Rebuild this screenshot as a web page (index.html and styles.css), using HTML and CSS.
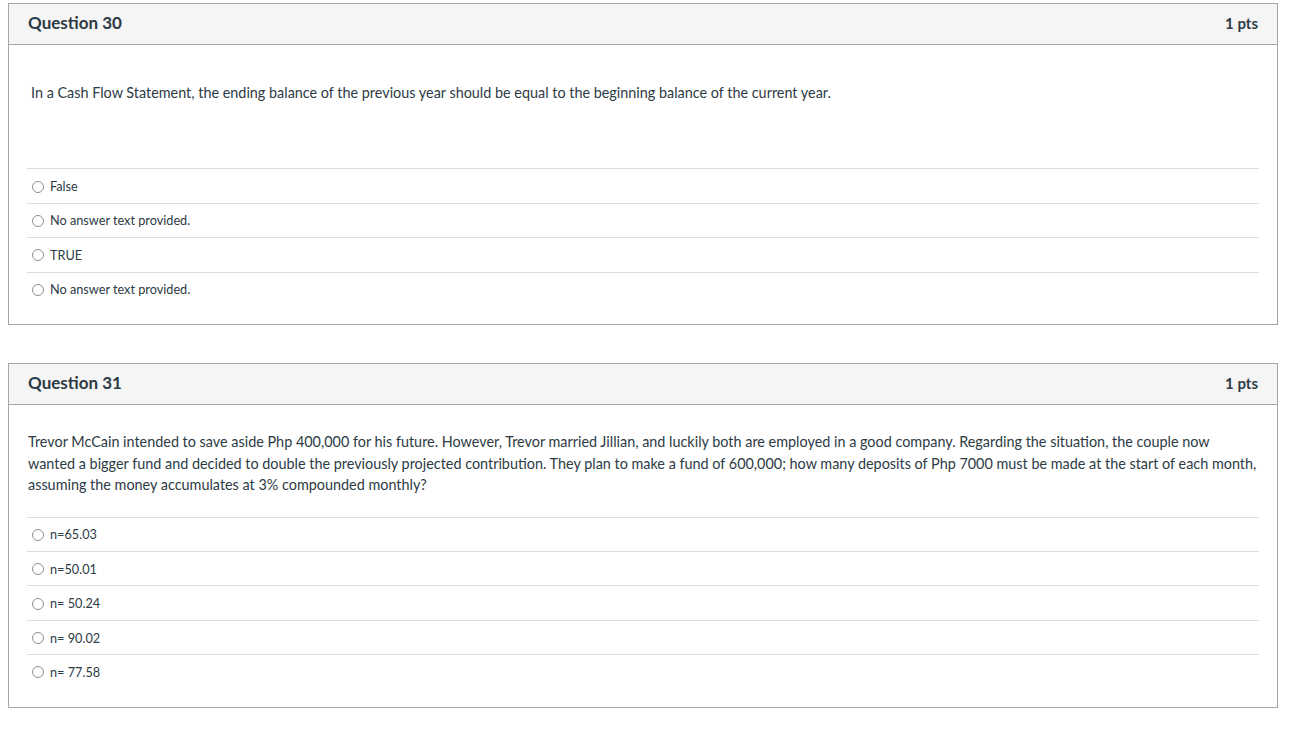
FILE: index.html
```html
<!DOCTYPE html>
<html lang="en">
<head>
    <meta charset="UTF-8">
    <meta name="viewport" content="width=device-width, initial-scale=1.0">
    <title>Quiz</title>
    <link rel="stylesheet" href="styles.css">
</head>
<body>
    <div class="question">
        <div class="header">
            <span class="name">Question 30</span>
            <span class="pts">1 pts</span>
        </div>
        <div class="text text-first">
            In a Cash Flow Statement, the ending balance of the previous year should be equal to the beginning balance of the current year.
        </div>
        <div class="answers">
            <div class="answer"><span class="radio"></span>False</div>
            <div class="answer"><span class="radio"></span>No answer text provided.</div>
            <div class="answer"><span class="radio"></span>TRUE</div>
            <div class="answer"><span class="radio"></span>No answer text provided.</div>
        </div>
    </div>

    <div class="question">
        <div class="header">
            <span class="name">Question 31</span>
            <span class="pts">1 pts</span>
        </div>
        <div class="text">
            Trevor McCain intended to save aside Php 400,000 for his future. However, Trevor married Jillian, and luckily both are employed in a good company. Regarding the situation, the couple now wanted a bigger fund and decided to double the previously projected contribution. They plan to make a fund of 600,000; how many deposits of Php 7000 must be made at the start of each month, assuming the money accumulates at 3% compounded monthly?
        </div>
        <div class="answers">
            <div class="answer"><span class="radio"></span>n=65.03</div>
            <div class="answer"><span class="radio"></span>n=50.01</div>
            <div class="answer"><span class="radio"></span>n= 50.24</div>
            <div class="answer"><span class="radio"></span>n= 90.02</div>
            <div class="answer"><span class="radio"></span>n= 77.58</div>
        </div>
    </div>
</body>
</html>
```

FILE: styles.css
```css
*{
    padding: 0;
    margin: 0;
    box-sizing: border-box;
}
body{
    margin: 3px 27px 0 8px;
    font-family: Lato, "Open Sans", sans-serif;
    color: #2d3b45;
    background: #fff;
}
.question{
    border: 1px solid #a5a5a5;
    margin-bottom: 38px;
}
.header{
    display: flex;
    justify-content: space-between;
    align-items: center;
    height: 41px;
    padding: 0 19px 3px 19px;
    background: #f5f5f5;
    border-bottom: 1px solid #a5a5a5;
    font-weight: bold;
}
.name{
    font-size: 17px;
}
.pts{
    font-size: 15px;
}
.text{
    font-size: 14.4px;
    line-height: 21.4px;
    padding: 26px 19px 21px 19px;
}
.text-first{
    padding: 37px 19px 65px 22px;
}
.answers{
    margin: 0 18px 18.5px 18px;
}
.answer{
    display: flex;
    align-items: center;
    height: 34.4px;
    padding-left: 5px;
    border-top: 1px solid #dcdcdc;
    font-size: 12.7px;
}
.radio{
    width: 12px;
    height: 12px;
    border: 1px solid #8a9099;
    border-radius: 50%;
    margin-right: 6px;
    margin-top: 1px;
}
```
